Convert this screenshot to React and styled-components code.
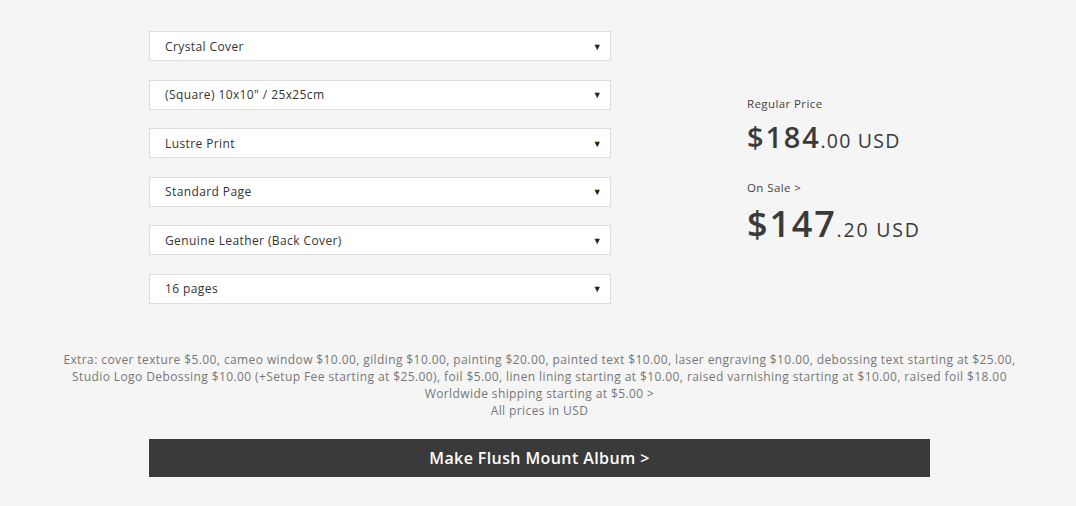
import styled, { createGlobalStyle } from 'styled-components';

const GlobalStyle = createGlobalStyle`
  html, body {
    margin: 0;
    padding: 0;
    background: #f5f5f5;
  }

  body {
    font-family: 'Open Sans', 'Liberation Sans', sans-serif;
    color: #333;
  }
`;

const Page = styled.div`
  width: 781px;
  margin: 0 0 0 149px;
  padding-top: 31px;
`;

const Top = styled.div`
  display: flex;
  gap: 136px;
`;

const Options = styled.div`
  display: flex;
  flex-direction: column;
  gap: 18.6px;
  width: 462px;
`;

const Select = styled.div`
  height: 30px;
  box-sizing: border-box;
  background: #fff;
  border: 1px solid #dedede;
  display: flex;
  align-items: center;
  justify-content: space-between;
  padding: 0 8px 0 15px;
  font-size: 12px;
  letter-spacing: 0.4px;
  color: #333;
`;

const Arrow = styled.span`
  font-size: 9px;
  color: #222;
`;

const Prices = styled.div`
  padding-top: 66px;
  display: flex;
  flex-direction: column;
`;

const Label = styled.div`
  font-size: 11.5px;
  line-height: 14px;
  letter-spacing: 0.4px;
  color: #444;
  margin-bottom: ${(p) => p.gap}px;
`;

const Amount = styled.div`
  color: #3a3a3a;
  font-weight: 600;
  font-size: ${(p) => p.size}px;
  line-height: 1;
  margin-bottom: ${(p) => p.after || 0}px;
  letter-spacing: 1.8px;

  small {
    font-size: 19.5px;
    font-weight: 500;
    letter-spacing: ${(p) => p.small}px;
  }
`;

const Extras = styled.div`
  margin: 47px -100px 0;
  text-align: center;
  font-size: 12px;
  line-height: 17px;
  letter-spacing: 0.4px;
  color: #777;
`;

const Button = styled.button`
  display: block;
  width: 100%;
  height: 38px;
  margin-top: 20px;
  border: 0;
  background: #3a3a3a;
  color: #fff;
  font-family: 'Open Sans', 'Liberation Sans', sans-serif;
  font-size: 16px;
  font-weight: 600;
  letter-spacing: 0.4px;
  cursor: pointer;
`;

const options = [
  'Crystal Cover',
  '(Square) 10x10" / 25x25cm',
  'Lustre Print',
  'Standard Page',
  'Genuine Leather (Back Cover)',
  '16 pages',
];

export default function App() {
  return (
    <>
      <GlobalStyle />
      <Page>
        <Top>
          <Options>
            {options.map((o) => (
              <Select key={o}>
                <span>{o}</span>
                <Arrow>▼</Arrow>
              </Select>
            ))}
          </Options>
          <Prices>
            <Label gap={11}>Regular Price</Label>
            <Amount size={29} after={30} small={1.2}>
              $184<small>.00 USD</small>
            </Amount>
            <Label gap={11}>On Sale &gt;</Label>
            <Amount size={36} small={1.8}>
              $147<small>.20 USD</small>
            </Amount>
          </Prices>
        </Top>
        <Extras>
          Extra: cover texture $5.00, cameo window $10.00, gilding $10.00, painting $20.00, painted text $10.00, laser engraving $10.00, debossing text starting at $25.00,
          <br />
          Studio Logo Debossing $10.00 (+Setup Fee starting at $25.00), foil $5.00, linen lining starting at $10.00, raised varnishing starting at $10.00, raised foil $18.00
          <br />
          Worldwide shipping starting at $5.00 &gt;
          <br />
          All prices in USD
        </Extras>
        <Button>Make Flush Mount Album &gt;</Button>
      </Page>
    </>
  );
}
